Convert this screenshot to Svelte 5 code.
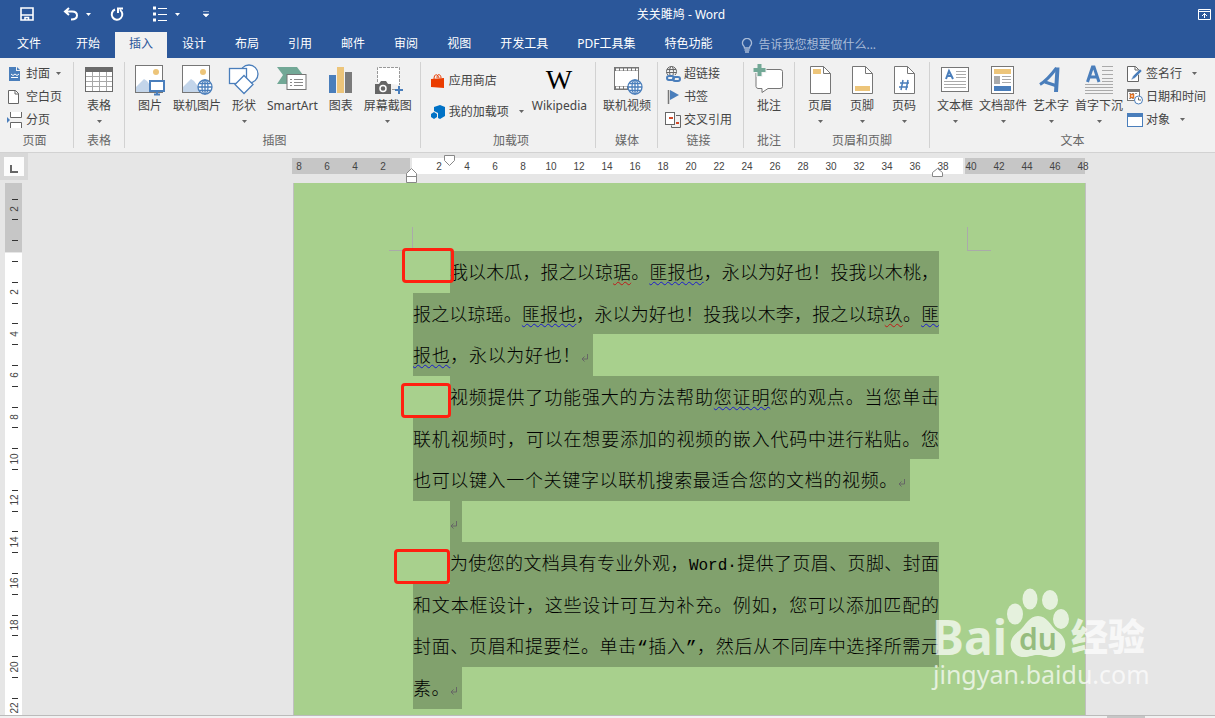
<script lang="ts">
	import type { Snippet } from 'svelte';

	type Tone = 'grammar' | 'spelling' | 'latin';
	type Run = { text: string; tone?: Tone };
	type Line = { runs: Run[]; size?: string; mark?: boolean };

	const tabs = ['文件', '开始', '插入', '设计', '布局', '引用', '邮件', '审阅', '视图', '开发工具', 'PDF工具集', '特色功能'];
	let active = $state('插入');

	const paragraphs: Line[][] = [
		[
			{
				runs: [
					{ text: '我以木瓜，报之以琼' },
					{ text: '琚', tone: 'spelling' },
					{ text: '。' },
					{ text: '匪报也', tone: 'grammar' },
					{ text: '，永以为好也！投我以木桃，' }
				]
			},
			{
				runs: [
					{ text: '报之以琼瑶。' },
					{ text: '匪报也', tone: 'grammar' },
					{ text: '，永以为好也！投我以木李，报之以琼' },
					{ text: '玖', tone: 'spelling' },
					{ text: '。' },
					{ text: '匪', tone: 'grammar' }
				]
			},
			{
				runs: [{ text: '报也', tone: 'grammar' }, { text: '，永以为好也！' }],
				size: 'short',
				mark: true
			}
		],
		[
			{
				runs: [
					{ text: '视频提供了功能强大的方法帮助' },
					{ text: '您证明', tone: 'grammar' },
					{ text: '您的观点。当您单击' }
				]
			},
			{ runs: [{ text: '联机视频时，可以在想要添加的视频的嵌入代码中进行粘贴。您' }] },
			{
				runs: [{ text: '也可以键入一个关键字以联机搜索最适合您的文档的视频。' }],
				size: 'long',
				mark: true
			}
		],
		[{ runs: [], size: 'blank', mark: true }],
		[
			{
				runs: [
					{ text: '为使您的文档具有专业外观，' },
					{ text: 'Word·', tone: 'latin' },
					{ text: '提供了页眉、页脚、封面' }
				]
			},
			{ runs: [{ text: '和文本框设计，这些设计可互为补充。例如，您可以添加匹配的' }] },
			{ runs: [{ text: '封面、页眉和提要栏。单击“插入”，然后从不同库中选择所需元' }] },
			{ runs: [{ text: '素。' }], size: 'tiny', mark: true }
		]
	];

	const range = (n: number) => Array.from({ length: n }, (_, i) => i);
	const across = range(29).map((i) => ({ x: 14 + i * 28, n: Math.abs(i * 2 - 8) }));
	const down = range(13).map((i) => ({ y: Math.round(26 + i * 41.6), n: Math.abs(i * 2 - 2) }));
	const ticks = range(25).map((i) => Math.round(15.5 + i * 20.8));
</script>

{#snippet caret()}
	<svg class="caret" width="5" height="3" viewBox="0 0 5 3"><path d="M0 0h5L2.5 3z" fill="currentColor" /></svg>
{/snippet}

{#snippet big(label: string, icon: Snippet, drop: boolean)}
	<button class="big">
		{@render icon()}
		<span>{label}</span>
		{#if drop}{@render caret()}{/if}
	</button>
{/snippet}

{#snippet small(label: string, icon: Snippet, drop: boolean)}
	<button class="small">
		{@render icon()}
		<span>{label}</span>
		{#if drop}{@render caret()}{/if}
	</button>
{/snippet}

{#snippet globe()}
	<g fill="#fff" stroke="#4a7ebb" stroke-width="1.3">
		<circle cx="24" cy="23" r="7" />
		<ellipse cx="24" cy="23" rx="3" ry="7" />
		<path d="M24 16v14M17 23h14M18.5 19.5h11M18.5 26.5h11" fill="none" />
	</g>
{/snippet}

{#snippet photo()}
	<rect x="1.5" y="1.5" width="27" height="27" fill="#fff" stroke="#767676" />
	<circle cx="22" cy="8" r="3" fill="#edc57a" />
	<path d="M2 28v-5l8-8 3 2 8 11z" fill="#c3d5ea" />
{/snippet}

{#snippet coverIcon()}
	<svg width="16" height="16" viewBox="0 0 16 16">
		<path d="M2 1h7v4h4v10H2z" fill="#4a7ebb" /><path d="M10 1l3 3h-3z" fill="#4a7ebb" />
		<path d="M4 8l2 1.500 2-1.500 2 1.500 2-1.500M4 11.500h7" fill="none" stroke="#fff" />
	</svg>
{/snippet}
{#snippet blankIcon()}
	<svg width="16" height="16" viewBox="0 0 16 16">
		<path d="M1.500 1.500h7l3 3v10h-10z" fill="#fff" stroke="#666" /><path d="M8 1.500V5h4" fill="none" stroke="#666" />
	</svg>
{/snippet}
{#snippet breakIcon()}
	<svg width="16" height="16" viewBox="0 0 16 16">
		<path d="M3.500 0v5.500h11V0M3.500 16v-5.500h11V16" fill="#fff" stroke="#666" />
		<path d="M0 5l3 3-3 3z" fill="#4a7ebb" />
	</svg>
{/snippet}
{#snippet tableIcon()}
	<svg width="32" height="32" viewBox="0 0 32 32">
		<rect x="2.500" y="3.500" width="27" height="24" fill="#fff" stroke="#6a6a6a" /><path d="M2 3h28v5H2z" fill="#6a6a6a" />
		<path d="M9.500 8v19M16.500 8v19M23.500 8v19M3 12.500h26M3 17.500h26M3 22.500h26" stroke="#a8a8a8" />
	</svg>
{/snippet}
{#snippet pictureIcon()}
	<svg width="32" height="32" viewBox="0 0 32 32">
		{@render photo()}
		<path d="M15 16h16v12H15z" fill="#f1f1f1" />
		<rect x="16" y="17" width="14" height="10" fill="#fff" stroke="#4a7ebb" stroke-width="2" />
		<path d="M20 30.500h6M23 28v2" stroke="#4a7ebb" stroke-width="2" />
	</svg>
{/snippet}
{#snippet onlineIcon()}
	<svg width="32" height="32" viewBox="0 0 32 32">{@render photo()}{@render globe()}</svg>
{/snippet}
{#snippet shapesIcon()}
	<svg width="32" height="32" viewBox="0 0 32 32" fill="#fff" stroke="#4a7ebb" stroke-width="1.300">
		<circle cx="21" cy="10" r="9" /><rect x="1.500" y="4.500" width="17" height="15" /><path d="M16 11.500l9 9-9 9-9-9z" />
	</svg>
{/snippet}
{#snippet smartIcon()}
	<svg width="32" height="32" viewBox="0 0 32 32">
		<path d="M1 3h20l6 8-6 9H1l6-9z" fill="#72a896" />
		<rect x="11" y="10.500" width="19" height="15" fill="#fff" stroke="#747474" />
		<path d="M18 15.500h9M18 18.500h9M18 21.500h9M14 15.500h2M14 18.500h2M14 21.500h2" stroke="#888" />
	</svg>
{/snippet}
{#snippet chartIcon()}
	<svg width="32" height="32" viewBox="0 0 32 32">
		<path d="M4 11h7v18H4z" fill="#4a7ebb" /><path d="M12 3h7v26h-7z" fill="#edc57a" /><path d="M20 8h7v21h-7z" fill="#7b7b7b" />
	</svg>
{/snippet}
{#snippet screenIcon()}
	<svg width="32" height="32" viewBox="0 0 32 32">
		<path d="M5.500 18V3.500h22V21M20 25.500h4" fill="#fff" stroke="#999" stroke-dasharray="3 1" />
		<path d="M3 20h4l2-3h5l2 3h3v10H3z" fill="#666" /><circle cx="11" cy="24.500" r="3" fill="none" stroke="#fff" stroke-width="1.500" />
		<path d="M27 22v8M23 26h8" stroke="#4a7ebb" stroke-width="2" />
	</svg>
{/snippet}
{#snippet storeIcon()}
	<svg width="16" height="16" viewBox="0 0 16 16">
		<path d="M1 6l13-1v10L1 14z" fill="#eb3c00" /><path d="M4 6c0-6 4-5 5-1M7 5c0-5 4-4 4 0" fill="none" stroke="#eb3c00" />
	</svg>
{/snippet}
{#snippet addinIcon()}
	<svg width="16" height="16" viewBox="0 0 16 16" fill="#0072c6">
		<path d="M4 3l6-2 5 2v9l-5 3-2-1V9L4 7z" /><path d="M1 10l3-2 3 2v3l-3 2-3-2z" />
	</svg>
{/snippet}
{#snippet wikiIcon()}
	<svg class="wiki" width="32" height="32" viewBox="0 0 32 32"><text x="16" y="25" text-anchor="middle">W</text></svg>
{/snippet}
{#snippet videoIcon()}
	<svg width="32" height="32" viewBox="0 0 32 32">
		<rect x="3.500" y="3.500" width="24" height="22" fill="#fff" stroke="#777" />
		<path d="M4 5h23M4 24h20" stroke="#777" stroke-width="4" /><path d="M5 5.500h22M5 23.500h18" stroke="#fff" stroke-width="2" stroke-dasharray="3 1" />
		{@render globe()}
	</svg>
{/snippet}
{#snippet linkIcon()}
	<svg width="16" height="16" viewBox="0 0 16 16" fill="none">
		<g stroke="#666"><circle cx="6.500" cy="5.500" r="5" /><ellipse cx="6.500" cy="5.500" rx="2" ry="5" /><path d="M2 3.500h9M1.500 6.500h10" /></g>
		<path d="M1 9h15v7H1z" fill="#f1f1f1" />
		<g stroke="#4a7ebb" stroke-width="2"><rect x="2" y="10" width="7" height="4" rx="2" /><rect x="8" y="11" width="7" height="4" rx="2" /></g>
	</svg>
{/snippet}
{#snippet flagIcon()}
	<svg width="16" height="16" viewBox="0 0 16 16"><path d="M3.500 1v14" stroke="#777" stroke-width="1.500" /><path d="M5 1l9 5-9 5z" fill="#4a7ebb" /></svg>
{/snippet}
{#snippet crossIcon()}
	<svg width="16" height="16" viewBox="0 0 16 16">
		<rect x=".5" y=".5" width="9" height="12" fill="#fff" stroke="#666" /><path d="M11 3.500h4.500v12h-9v-2" fill="none" stroke="#666" />
		<path d="M4 6h4M11 11h3" stroke="#d24726" stroke-width="2" />
	</svg>
{/snippet}
{#snippet commentIcon()}
	<svg width="32" height="32" viewBox="0 0 32 32">
		<path d="M5 5.500h22q2.500 0 2.500 2v15q0 2-2.500 2H15l-6 4v-4H5q-2-.5-2-2v-15q0-2 2-2z" fill="#fff" stroke="#777" />
		<path d="M6.500-1v14M-.5 6h14" stroke="#f1f1f1" stroke-width="6" /><path d="M6.500 0v12M.5 6h12" stroke="#72a896" stroke-width="4" />
	</svg>
{/snippet}
{#snippet sheet()}
	<path d="M6.500 2.500h13l7 7v20h-20z" fill="#fff" stroke="#767676" /><path d="M19.500 2.500v7h7" fill="none" stroke="#767676" />
{/snippet}
{#snippet headerIcon()}
	<svg width="32" height="32" viewBox="0 0 32 32">{@render sheet()}<path d="M9 5h8v5H9z" fill="#edc57a" /></svg>
{/snippet}
{#snippet footerIcon()}
	<svg width="32" height="32" viewBox="0 0 32 32">{@render sheet()}<path d="M9 22h15v5H9z" fill="#edc57a" /></svg>
{/snippet}
{#snippet numberIcon()}
	<svg width="32" height="32" viewBox="0 0 32 32">{@render sheet()}<path d="M15 16l-2 10M20 16l-2 10M12 19h9M11 23h9" stroke="#4a7ebb" stroke-width="1.500" /></svg>
{/snippet}
{#snippet boxIcon()}
	<svg width="32" height="32" viewBox="0 0 32 32">
		<rect x="2.500" y="3.500" width="27" height="24" fill="#fff" stroke="#767676" />
		<path d="M7 15l3-8 4 8M8 12h5" fill="none" stroke="#4a7ebb" stroke-width="2" />
		<path d="M17 7.500h10M17 10.500h10M17 13.500h10M5 17.500h22M5 20.500h22M5 23.500h22" stroke="#aaa" />
	</svg>
{/snippet}
{#snippet partsIcon()}
	<svg width="32" height="32" viewBox="0 0 32 32">
		<rect x="4.500" y="2.500" width="22" height="27" fill="#fff" stroke="#767676" /><path d="M7 5h17v5H7z" fill="#edc57a" />
		<path d="M7 12h6v8H7z" fill="#aaa" /><path d="M15 12.500h9M15 15.500h9M15 18.500h9" stroke="#aaa" /><path d="M7 22h17v5H7z" fill="#4a7ebb" />
	</svg>
{/snippet}
{#snippet artIcon()}
	<svg width="32" height="32" viewBox="0 0 32 32" fill="none" stroke="#4a7ebb">
		<path d="M5 20.500C11 17 17 10 21.500 4" stroke-width="3" />
		<path d="M22.500 3.500L21 28" stroke-width="4" />
		<path d="M10 18l12 4" stroke-width="3" />
	</svg>
{/snippet}
{#snippet dropIcon()}
	<svg width="32" height="32" viewBox="0 0 32 32">
		<path d="M4.500 18L9.500 3h1.500L16 18M6.500 13h8" fill="none" stroke="#4a7ebb" stroke-width="3" />
		<path d="M19 2.500h11M19 6.500h11M19 10.500h11M19 14.500h11M19 17.500h11M2 20.500h28M2 23.500h28M2 26.500h28M2 29.500h28" stroke="#aaa" />
	</svg>
{/snippet}
{#snippet signIcon()}
	<svg width="16" height="16" viewBox="0 0 16 16">
		<path d="M.5.5h8l3 3v12H.5z" fill="#fff" stroke="#666" /><path d="M8 .5V4h4" fill="none" stroke="#666" />
		<path d="M4 14l2-4 7-7 2 2-7 7z" fill="#4a7ebb" stroke="#f1f1f1" stroke-width=".5" />
	</svg>
{/snippet}
{#snippet dateIcon()}
	<svg width="16" height="16" viewBox="0 0 16 16">
		<rect x=".5" y=".5" width="12" height="11" fill="#fff" stroke="#777" /><path d="M0 0h13v3H0z" fill="#777" />
		<path d="M2 4.500h9M2 9.500h5" stroke="#999" stroke-dasharray="2 1" /><rect x="3.500" y="5.500" width="3" height="3" fill="none" stroke="#e07020" stroke-width="1.500" />
		<circle cx="11.500" cy="11" r="4" fill="#fff" stroke="#4a7ebb" /><path d="M11.500 8.500V11H14" fill="none" stroke="#666" />
	</svg>
{/snippet}
{#snippet objectIcon()}
	<svg width="16" height="16" viewBox="0 0 16 16"><rect x=".5" y="1.500" width="15" height="13" fill="#fff" stroke="#4a7ebb" /><path d="M0 1h16v4H0z" fill="#4a7ebb" /></svg>
{/snippet}

<div class="app">
	<header>
		<div class="titlebar">
			<div class="quick">
				<button aria-label="保存" class="save">
					<svg width="14" height="14" viewBox="0 0 14 14"><path d="M1 1h12v12H1zM1 8h12M5 13v-2.500h3.500V13" fill="none" stroke="#fff" stroke-width="1.600" /></svg>
				</button>
				<button aria-label="撤消" class="undo">
					<svg width="15" height="14" viewBox="0 0 15 14"><path d="M6 1L2 4.500 6 8M2 4.500h7q5 0 5 4 0 4-6 4" fill="none" stroke="#fff" stroke-width="2" /></svg>
					{@render caret()}
				</button>
				<button aria-label="重复" class="redo">
					<svg width="14" height="14" viewBox="0 0 14 14"><path d="M5 2.500a5.300 5.300 0 1 0 5 .5M8 6V1.500h5" fill="none" stroke="#fff" stroke-width="2" /></svg>
				</button>
				<button aria-label="项目符号" class="bullets">
					<svg width="14" height="16" viewBox="0 0 14 16"><path d="M0 2h3M0 8h3M0 14h3" stroke="#fff" stroke-width="3" /><path d="M5 2.500h9M5 8.500h9M5 14.500h9" stroke="#fff" /></svg>
					{@render caret()}
				</button>
				<button aria-label="自定义快速访问工具栏" class="custom">
					<svg width="6" height="6" viewBox="0 0 6 6"><path d="M0 .5h6M0 3h6L3 6z" fill="#fff" stroke="#fff" stroke-width=".5" /></svg>
				</button>
			</div>
			<h1>关关雎鸠 - Word</h1>
			<div class="window">
				<button aria-label="功能区显示选项">
					<svg width="13" height="11" viewBox="0 0 13 11"><path d="M.5.500h12v10H.5zM0 2.500h13M6.500 4v5M4 7l2.500-2.500L9 7" fill="none" stroke="#fff" /></svg>
				</button>
			</div>
		</div>
		<nav>
			{#each tabs as tab}
				<button class="tab" class:active={active === tab} class:file={tab === '文件'} onclick={() => (active = tab)}>{tab}</button>
			{/each}
			<button class="tell">
				<svg width="12" height="15" viewBox="0 0 12 15"><path d="M3.500 10Q3.500 8.500 2 7A4.500 4.500 0 1 1 10 7Q8.500 8.500 8.500 10zM3.500 12h5M4 14h4" fill="none" stroke="#a9bcd8" stroke-width="1.300" /></svg>
				告诉我您想要做什么...
			</button>
		</nav>
	</header>

	<div class="ribbon">
		<section class="group pages">
			<div class="tools">
				<div class="stack">
					{@render small('封面', coverIcon, true)}
					{@render small('空白页', blankIcon, false)}
					{@render small('分页', breakIcon, false)}
				</div>
			</div>
			<h2>页面</h2>
		</section>
		<section class="group wide">
			<div class="tools">{@render big('表格', tableIcon, true)}</div>
			<h2>表格</h2>
		</section>
		<section class="group pictures">
			<div class="tools">
				{@render big('图片', pictureIcon, false)}
				{@render big('联机图片', onlineIcon, false)}
				{@render big('形状', shapesIcon, true)}
				{@render big('SmartArt', smartIcon, false)}
				{@render big('图表', chartIcon, false)}
				{@render big('屏幕截图', screenIcon, true)}
			</div>
			<h2>插图</h2>
		</section>
		<section class="group addins">
			<div class="tools">
				<div class="stack">
					{@render small('应用商店', storeIcon, false)}
					{@render small('我的加载项', addinIcon, true)}
				</div>
				{@render big('Wikipedia', wikiIcon, false)}
			</div>
			<h2>加载项</h2>
		</section>
		<section class="group media">
			<div class="tools">{@render big('联机视频', videoIcon, false)}</div>
			<h2>媒体</h2>
		</section>
		<section class="group links">
			<div class="tools">
				<div class="stack">
					{@render small('超链接', linkIcon, false)}
					{@render small('书签', flagIcon, false)}
					{@render small('交叉引用', crossIcon, false)}
				</div>
			</div>
			<h2>链接</h2>
		</section>
		<section class="group wide">
			<div class="tools">{@render big('批注', commentIcon, false)}</div>
			<h2>批注</h2>
		</section>
		<section class="group wide">
			<div class="tools">
				{@render big('页眉', headerIcon, true)}
				{@render big('页脚', footerIcon, true)}
				{@render big('页码', numberIcon, true)}
			</div>
			<h2>页眉和页脚</h2>
		</section>
		<section class="group text">
			<div class="tools">
				{@render big('文本框', boxIcon, true)}
				{@render big('文档部件', partsIcon, true)}
				{@render big('艺术字', artIcon, true)}
				{@render big('首字下沉', dropIcon, true)}
				<div class="stack">
					{@render small('签名行', signIcon, true)}
					{@render small('日期和时间', dateIcon, false)}
					{@render small('对象', objectIcon, true)}
				</div>
			</div>
			<h2>文本</h2>
		</section>
	</div>

	<main>
		<div class="corner">
			<button aria-label="制表符"><svg width="8" height="8" viewBox="0 0 8 8"><path d="M1 0v7h7" fill="none" stroke="#666" stroke-width="2" /></svg></button>
		</div>
		<div class="hruler">
			<svg width="820" height="30" viewBox="0 0 820 30">
				<path d="M7 5h118v16H7zM680 5h120v16H680z" fill="#c6c6c6" />
				<path d="M127 5h551v16H127z" fill="#fff" />
				{#each across as mark}
					{#if mark.n}<text x={mark.x} y="17">{mark.n}</text>{/if}
				{/each}
				<g fill="#fff" stroke="#888">
					<path d="M159.500 2.500h10v5l-5 5-5-5z" />
					<path d="M121.500 29.500v-9l5-5 5 5v9zM121.500 23.500h10" />
					<path d="M647.500 23.500v-4l5-4 5 4v4z" />
				</g>
			</svg>
		</div>
		<svg class="vruler" width="17" height="532" viewBox="0 0 17 532">
			<path d="M0 0h17v69H0z" fill="#c6c6c6" />
			<path d="M0 70h17v462H0z" fill="#fff" />
			{#each ticks as y}<path d="M7 {y}.5h6" stroke="#333" />{/each}
			{#each down as mark}
				{#if mark.n}<text transform="translate(13 {mark.y}) rotate(-90)">{mark.n}</text>{/if}
			{/each}
		</svg>
		<div class="stage">
			<article class="page">
				<i class="crop crop-left"></i>
				<i class="crop crop-right"></i>
				{#each paragraphs as lines}
					<p class:empty={lines[0].size === 'blank'}>
						{#each lines as line, i}
							<span class="line {line.size ?? ''}" class:indent={i === 0}
								>{#each line.runs as run}<span class={run.tone}>{run.text}</span>{/each}{#if line.mark}<svg class="return" width="8" height="8" viewBox="0 0 8 8"><path d="M6.500 0v5H1M3.500 2.500L1 5l2.500 2.500" fill="none" stroke="#666" /></svg>{/if}</span
							>
						{/each}
					</p>
				{/each}
				<i class="frame first"></i>
				<i class="frame second"></i>
				<i class="frame third"></i>
				<svg class="watermark" width="224" height="110" viewBox="0 0 224 110">
					<g fill="#fff">
						<text class="brand" x="1" y="74">Bai</text>
						<ellipse cx="84" cy="33" rx="8" ry="10.500" />
						<ellipse cx="99" cy="18" rx="7.500" ry="10.500" />
						<ellipse cx="119" cy="19" rx="8" ry="10" />
						<ellipse cx="130" cy="38" rx="8" ry="10" />
						<path d="M107 35c-9 0-12 9-19 15-14 9-9 26 5 26 6 0 8-2 14-2s8 2 14 2c14 0 19-17 5-26-7-6-10-15-19-15z" />
						<text class="brand han" x="140" y="70">经验</text>
						<text class="url" x="2" y="103">jingyan.baidu.com</text>
					</g>
					<text class="du" x="107" y="69" text-anchor="middle">du</text>
				</svg>
			</article>
		</div>
	</main>
	<footer><span></span></footer>
</div>

<style>
	:global(body) {
		background: #e6e6e6;
	}

	.app {
		color: #444;
		display: flex;
		flex-direction: column;
		font-family: 'Noto Sans', 'Noto Sans CJK SC', sans-serif;
		font-size: 12px;
		line-height: 16px;
		min-height: 100vh;
	}

	button {
		align-items: center;
		background: none;
		border: 0;
		color: inherit;
		display: flex;
		font: inherit;
		padding: 0;
		white-space: nowrap;
	}

	svg {
		display: block;
		flex: none;
	}

	h1,
	h2,
	p {
		font-size: 12px;
		font-weight: 400;
		margin: 0;
	}

	header {
		background: #2b579a;
		color: #fff;
	}

	.titlebar {
		display: flex;
		height: 32px;
	}

	.quick {
		align-items: center;
		display: flex;
		height: 28px;
		padding-left: 20px;
		width: 200px;
	}

	.quick button {
		gap: 8px;
	}

	.undo {
		margin-left: 29px;
	}

	.redo {
		margin-left: 19px;
	}

	.bullets {
		margin-left: 29px;
	}

	.custom {
		margin-left: 23px;
	}

	h1 {
		flex: 1;
		line-height: 30px;
		text-align: center;
	}

	.window {
		display: flex;
		height: 28px;
		justify-content: flex-end;
		padding-right: 4px;
		width: 69px;
	}

	nav {
		display: flex;
		gap: 1px;
		height: 26px;
	}

	.tab {
		padding: 0 14px 2px;
	}

	.tab.file {
		padding: 0 20px 2px 17px;
	}

	.tab.active {
		background: #f1f1f1;
		color: #2b579a;
	}

	.tell {
		color: #a9bcd8;
		gap: 5px;
		margin-left: 14px;
	}

	.ribbon {
		background: #f1f1f1;
		border-bottom: 1px solid #d2d2d2;
		box-sizing: border-box;
		display: flex;
		height: 95px;
		padding: 4px 0;
	}

	.group {
		border-right: 1px solid #d2d2d2;
		display: flex;
		flex: none;
		flex-direction: column;
	}

	.group h2 {
		color: #666;
		line-height: 14px;
		text-align: center;
	}

	.tools {
		display: flex;
		flex: 1;
	}

	.big {
		align-items: center;
		flex-direction: column;
		min-width: 36px;
		padding: 2px 0 0;
	}

	.big span {
		margin-top: 2px;
		padding: 0 5px;
	}

	.big .caret {
		margin-top: 6px;
	}

	.caret {
		color: #666;
	}

	.quick .caret {
		color: #fff;
	}

	.stack {
		display: flex;
		flex-direction: column;
	}

	.small {
		gap: 3px;
		height: 23px;
	}

	.group.pages {
		padding: 0 11px 0 7px;
	}

	.group.pictures {
		padding: 0 3px 0 7px;
	}

	.group.wide {
		padding: 0 4px;
	}

	.wide .big {
		min-width: 42px;
	}

	.group.addins {
		padding: 0 3px 0 9px;
	}

	.addins .stack {
		padding: 3px 3px 0 0;
	}

	.addins .small {
		height: 31px;
	}

	.small .caret {
		margin-left: 3px;
	}

	.addins .caret,
	.text .small .caret {
		margin-left: 7px;
	}

	.group.media {
		padding: 0 1px 0 2px;
	}

	.group.links {
		padding: 0 11px 0 7px;
	}

	.group.text {
		border: 0;
		flex: 1;
		padding: 0 4px;
	}

	.text .big {
		min-width: 42px;
	}

	.text .big span {
		padding: 0 3px;
	}

	.text .stack {
		padding-left: 1px;
	}

	.wiki {
		overflow: visible;
	}

	.wiki text {
		fill: #000;
		font-family: 'Liberation Serif', serif;
		font-size: 28px;
	}

	main {
		display: grid;
		flex: 1;
		grid-template-columns: 28px 1fr;
		grid-template-rows: 30px auto;
		overflow: hidden;
	}

	.corner {
		background: #d8d8d8;
		height: 19px;
		padding: 4px;
	}

	.corner button {
		background: #fcfcfc;
		height: 19px;
		justify-content: center;
		padding: 4px 0 0;
		width: 20px;
	}

	.hruler {
		padding-left: 257px;
	}

	.hruler text,
	.vruler text {
		fill: #444;
		font-family: 'Liberation Sans', sans-serif;
		font-size: 10px;
		text-anchor: middle;
	}

	.vruler {
		margin-left: 5px;
	}

	.stage {
		padding-left: 265px;
	}

	.page {
		background: #a8d08d;
		border: 1px solid #c0c0c0;
		border-width: 0 1px;
		box-sizing: border-box;
		max-width: 793px;
		padding: 68px 146px 6px 119px;
		position: relative;
	}

	.line {
		background: #81a16d;
		box-sizing: border-box;
		color: #000;
		display: block;
		font-family: 'Liberation Mono', 'Noto Sans CJK SC', sans-serif;
		font-size: 18px;
		font-weight: 300;
		height: 42px;
		line-height: 46px;
		text-align-last: justify;
		white-space: nowrap;
	}

	.line:nth-child(2),
	.empty .line {
		height: 41px;
	}

	.line.indent {
		margin-left: 37px;
	}

	.line.short {
		padding-right: 4px;
		width: 180px;
	}

	.line.long {
		padding-right: 4px;
		width: 497px;
	}

	.line.blank {
		width: 12px;
	}

	.line.tiny {
		padding-right: 4px;
		width: 49px;
	}

	.return {
		display: inline-block;
	}

	.latin {
		font-family: 'Liberation Mono', monospace;
		font-size: 16px;
		font-weight: 400;
	}

	.grammar {
		text-decoration: underline wavy #1a1ad0 1px;
		text-underline-offset: 2px;
	}

	.spelling {
		text-decoration: underline wavy #c01818 1px;
		text-underline-offset: 2px;
	}

	.crop {
		border-bottom: 1px solid #aaa;
		height: 23px;
		position: absolute;
		top: 44px;
		width: 23px;
	}

	.crop-left {
		border-right: 1px solid #aaa;
		left: 95px;
	}

	.crop-right {
		border-left: 1px solid #aaa;
		left: 673px;
	}

	.frame {
		border: 3px solid #ff2010;
		border-radius: 4px;
		box-sizing: border-box;
		height: 35px;
		position: absolute;
	}

	.frame.first {
		left: 108px;
		top: 65px;
		width: 52px;
	}

	.frame.second {
		left: 107px;
		top: 200px;
		width: 50px;
	}

	.frame.third {
		left: 100px;
		top: 366px;
		width: 56px;
	}

	.watermark {
		left: 637px;
		opacity: 0.7;
		position: absolute;
		top: 398px;
	}

	.brand {
		font-size: 48px;
		font-weight: 700;
	}

	.brand.han {
		font-size: 37px;
		font-weight: 900;
	}

	.url {
		font-size: 25px;
	}

	.du {
		fill: #8fb478;
		font-size: 30px;
		font-weight: 600;
	}

	footer {
		background: #f1f1f1;
		border-top: 1px solid #bbb;
		display: flex;
		height: 2px;
		justify-content: flex-end;
		padding-right: 70px;
	}

	footer span {
		background: #c6c6c6;
		width: 38px;
	}
</style>
